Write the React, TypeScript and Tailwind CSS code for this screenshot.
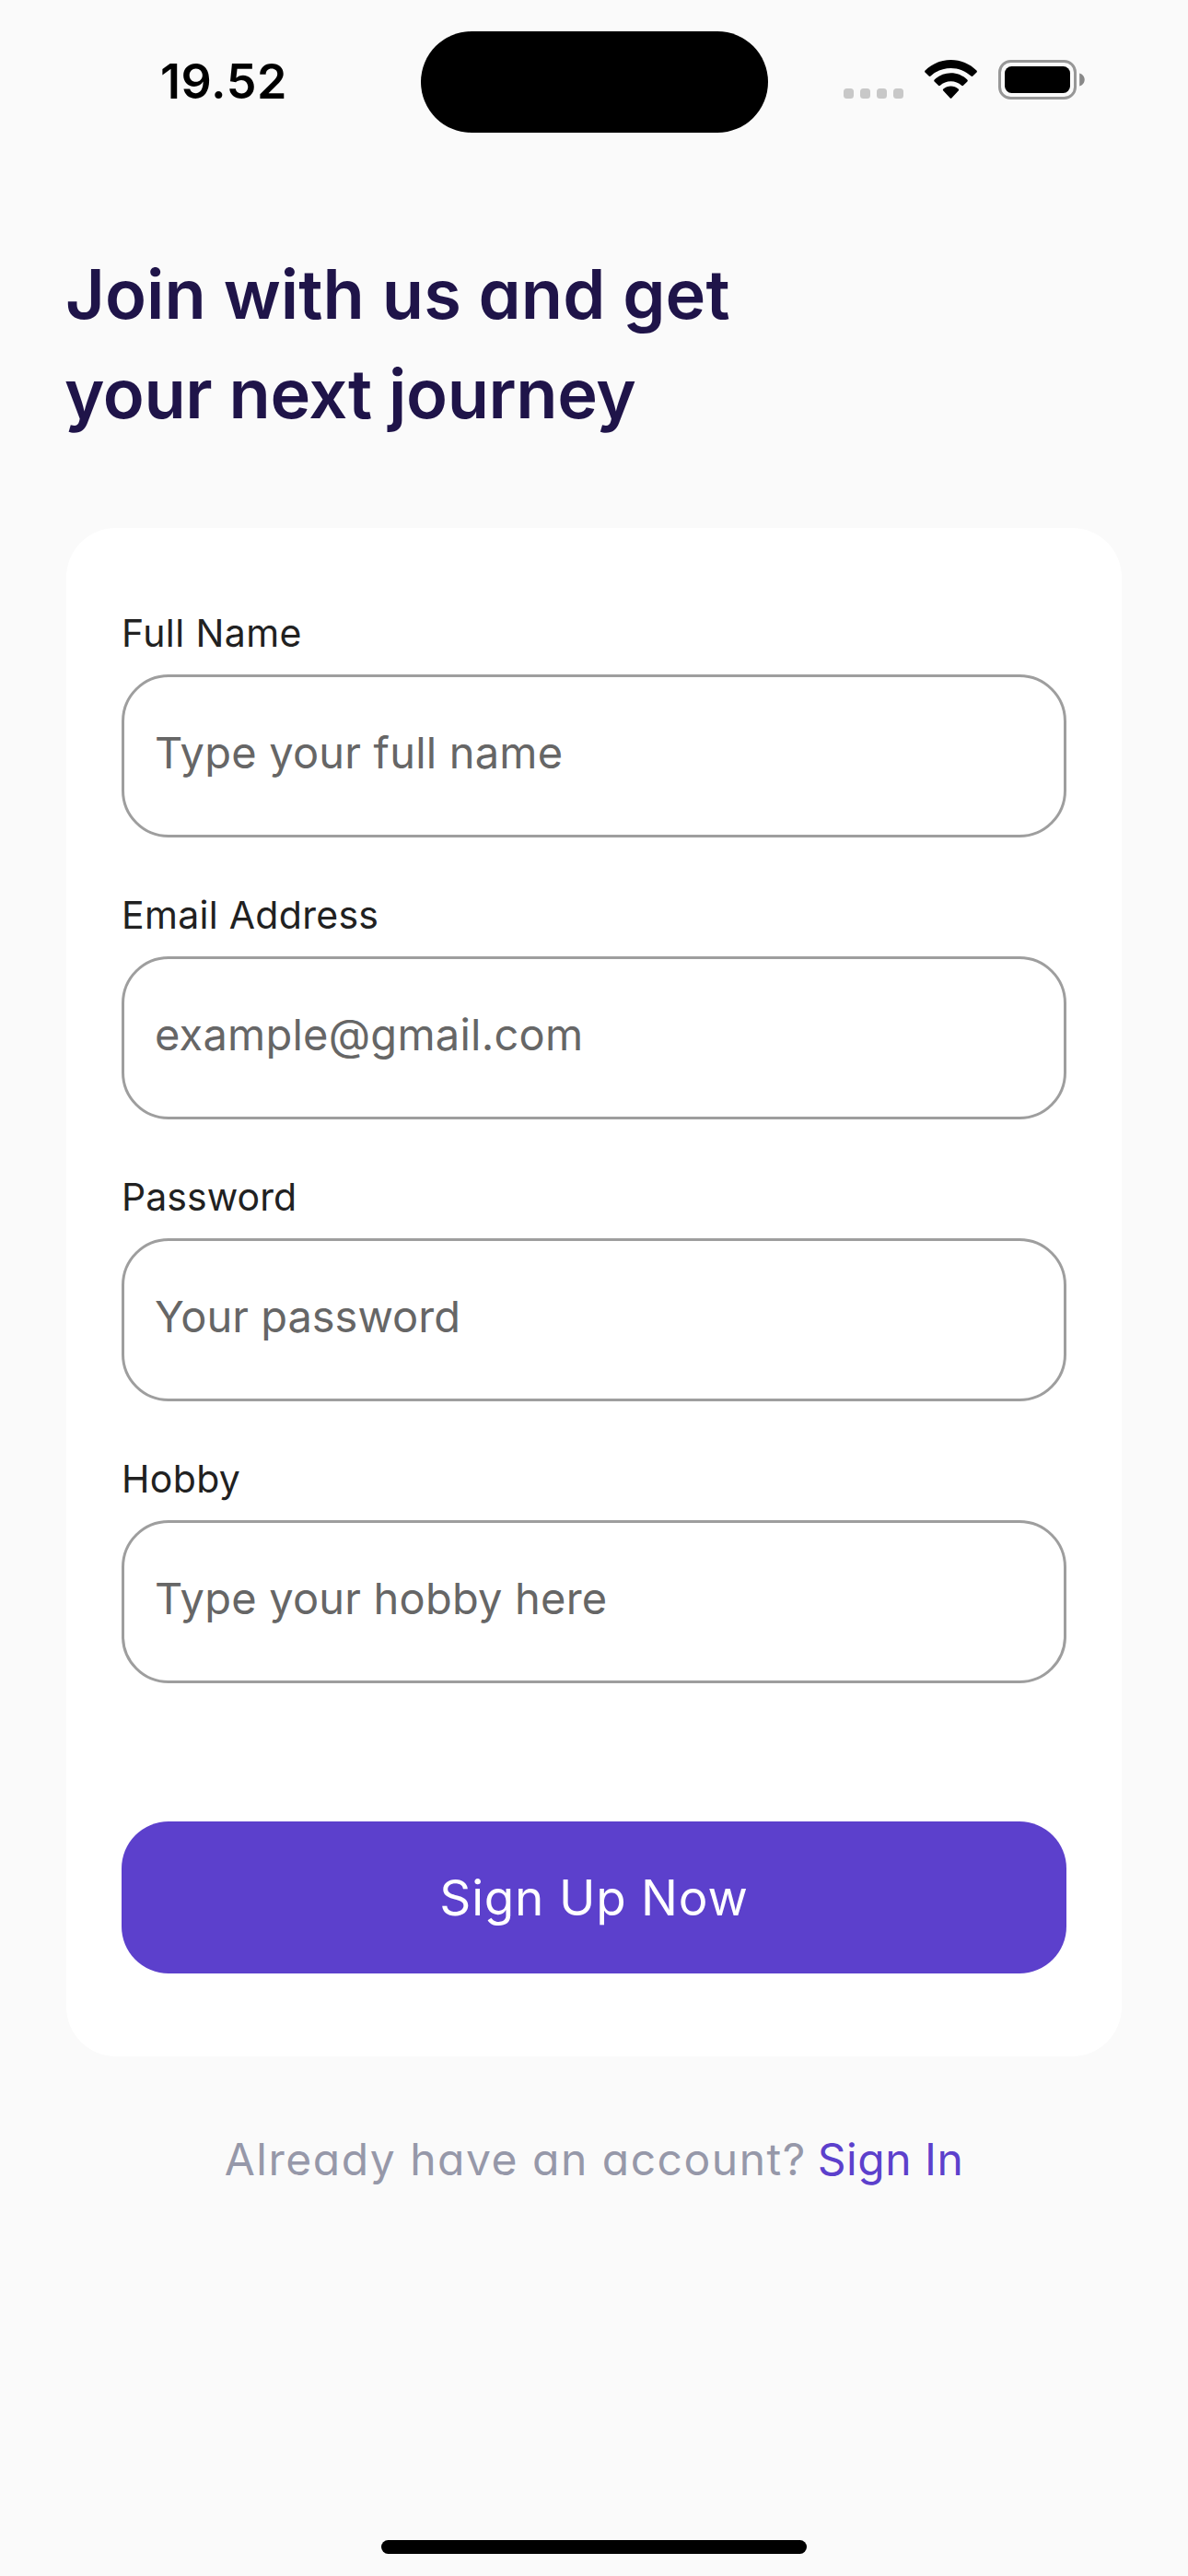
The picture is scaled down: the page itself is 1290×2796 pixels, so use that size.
import { useState } from "react";

type Field = { id: string; label: string; placeholder: string; type: string; tracking: string; inputTracking: string };

const fields: Field[] = [
  { id: "name", label: "Full Name", placeholder: "Type your full name", type: "text", tracking: "tracking-[0.4px]", inputTracking: "tracking-[0.2px]" },
  { id: "email", label: "Email Address", placeholder: "example@gmail.com", type: "text", tracking: "tracking-[0.3px]", inputTracking: "tracking-[0.23px]" },
  { id: "password", label: "Password", placeholder: "Your password", type: "password", tracking: "tracking-[0.05px]", inputTracking: "tracking-normal" },
  { id: "hobby", label: "Hobby", placeholder: "Type your hobby here", type: "text", tracking: "tracking-[0.35px]", inputTracking: "tracking-[0.2px]" },
];

function StatusBar() {
  return (
    <header className="flex h-[177px] shrink-0 items-start text-black">
      <div className="w-[457px] pl-[174px] pt-[59px] text-[52px] leading-[60px] font-semibold tracking-[0.6px]">
        19.52
      </div>
      <div className="mt-[33.5px] h-[110.5px] w-[376.5px] rounded-full bg-black" />
      <div className="ml-[82.5px] flex items-start">
        <div className="mt-24 flex gap-[7px]">
          {[0, 1, 2, 3].map((dot) => (
            <span key={dot} className="size-[11px] rounded-[3.5px] bg-[#c8c8c8]" />
          ))}
        </div>
        <svg className="mt-[65px] ml-[23px] h-[42px] w-[57px]" viewBox="0 0 57 42" fill="currentColor">
          <path d="M28.5 0C39.1 0 49 4.1 56.4 11.6C57 12.2 57.1 13 56.5 13.6L52.4 17.6C51.8 18.2 51 18.1 50.4 17.6C44.5 12 36.8 8.9 28.5 8.9S12.5 12 6.6 17.6C6 18.1 5.2 18.2 4.6 17.6L.5 13.6C-.1 13 0 12.2.6 11.6C8 4.1 17.9 0 28.5 0Z" />
          <path d="M28.5 14.3C35.2 14.3 41.5 16.9 46.3 21.4C46.9 22 47 22.8 46.4 23.4L42 27.8C41.5 28.4 40.7 28.3 40.1 27.8C37 25 32.9 23.3 28.5 23.3S20 25 16.9 27.8C16.3 28.3 15.5 28.4 15 27.8L10.6 23.4C10 22.8 10.1 22 10.7 21.4C15.5 16.9 21.8 14.3 28.5 14.3Z" />
          <path d="M28.5 28.6C31.5 28.6 34.3 29.7 36.6 31.5C37.3 32.1 37.3 32.9 36.7 33.5L29.5 41.2C28.9 41.9 28.1 41.9 27.5 41.2L20.3 33.5C19.7 32.9 19.7 32.1 20.4 31.5C22.7 29.7 25.5 28.6 28.5 28.6Z" />
        </svg>
        <svg className="mt-[65px] ml-[23px] h-[43px] w-[94px]" viewBox="0 0 94 43">
          <rect x="1.5" y="1.5" width="82" height="40" rx="12" fill="none" stroke="#979797" strokeWidth="3" />
          <rect x="7" y="7" width="71" height="29" rx="7.5" fill="black" />
          <path d="M88.2 14.5C91.5 15.5 93.7 18.2 93.7 21.5S91.5 27.5 88.2 28.5Z" fill="#888888" />
        </svg>
      </div>
    </header>
  );
}

function FormField({ field }: { field: Field }) {
  const [value, setValue] = useState("");
  return (
    <div className="flex flex-col">
      <label htmlFor={field.id} className={`text-[41px] leading-[54px] text-[#212121] ${field.tracking}`}>
        {field.label}
      </label>
      <input
        id={field.id}
        type={field.type}
        value={value}
        onChange={(event) => setValue(event.target.value)}
        placeholder={field.placeholder}
        className={`mt-[18px] h-[177px] w-full rounded-[51px] border-3 border-[#9e9e9e] bg-white pb-[9px] pl-[33px] text-[47px] text-[#212121] outline-none placeholder:text-[#666666] placeholder:opacity-100 ${field.inputTracking}`}
      />
    </div>
  );
}

export default function App() {
  return (
    <div className="flex h-[2796px] w-[1290px] flex-col overflow-hidden bg-[#fafafa] font-['Inter',sans-serif] antialiased">
      <StatusBar />
      <main className="flex flex-1 flex-col px-[72px] pt-[88px]">
        <h1 className="text-[74px] leading-[108px] font-[560] text-[#1f1449] [font-feature-settings:'cv11']">
          <span className="-ml-px block tracking-[0.08px]">Join with us and get</span>
          <span className="-ml-0.5 block tracking-[-0.4px]">your next journey</span>
        </h1>
        <form
          className="mt-[92px] flex h-[1659px] flex-col rounded-[54px] bg-white px-[60px] pt-[87px]"
          onSubmit={(event) => event.preventDefault()}
        >
          <div className="flex flex-col gap-[57px]">
            {fields.map((field) => (
              <FormField key={field.id} field={field} />
            ))}
          </div>
          <button
            type="submit"
            className="mt-[150px] h-[165px] w-full rounded-[51px] bg-[#5c40cc] pt-0.5 text-[53px] tracking-[0.8px] text-white"
          >
            Sign Up Now
          </button>
        </form>
        <p className="mt-[76px] flex justify-center gap-3 text-[48px] leading-[72px] whitespace-nowrap text-[#9698a9] [font-feature-settings:'cv11']">
          <span className="tracking-[1.5px]">Already have an account?</span>
          <a href="#" className="tracking-[0.5px] text-[#5c40cc]">Sign In</a>
        </p>
      </main>
      <div className="mb-6 h-[15px] w-[462px] shrink-0 self-center rounded-full bg-black" />
    </div>
  );
}
